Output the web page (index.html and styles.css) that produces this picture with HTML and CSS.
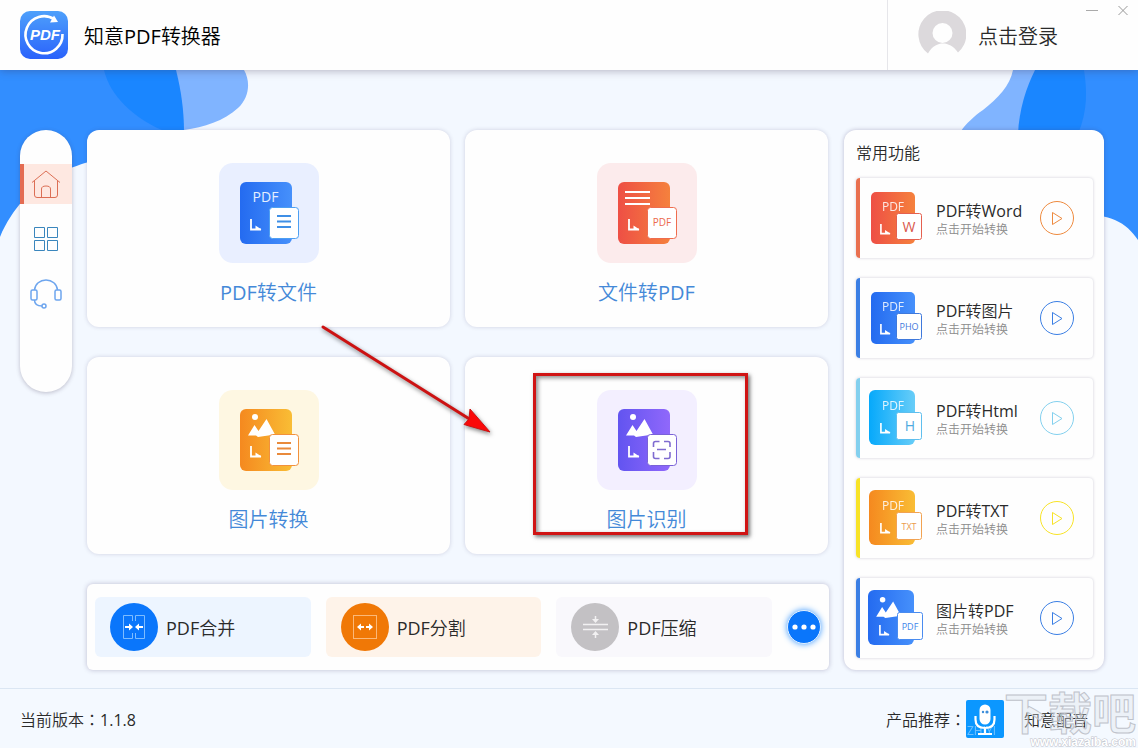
FILE: index.html
```html
<!DOCTYPE html>
<html lang="zh-CN">
<head>
  <meta charset="UTF-8">
  <meta name="viewport" content="width=device-width, initial-scale=1">
  <title>知意PDF转换器</title>
  <link rel="stylesheet" href="styles.css">
</head>
<body>

  <!-- shared gradients and icon parts -->
  <svg class="defs" width="0" height="0" aria-hidden="true">
    <defs>
      <linearGradient id="g-blue"><stop offset="0" stop-color="#246bf0"/><stop offset="1" stop-color="#4690fb"/></linearGradient>
      <linearGradient id="g-red"><stop offset="0" stop-color="#ee4f45"/><stop offset="1" stop-color="#f5813d"/></linearGradient>
      <linearGradient id="g-orange"><stop offset="0" stop-color="#f5891f"/><stop offset="1" stop-color="#f9bd35"/></linearGradient>
      <linearGradient id="g-purple"><stop offset="0" stop-color="#6254f0"/><stop offset="1" stop-color="#9068fb"/></linearGradient>
      <linearGradient id="g-cyan"><stop offset="0" stop-color="#06a9fb"/><stop offset="1" stop-color="#68cdf8"/></linearGradient>
      <linearGradient id="g-logo" x2="0" y2="1"><stop offset="0" stop-color="#4ea0fb"/><stop offset="1" stop-color="#2a62fb"/></linearGradient>
      <symbol id="corner" viewBox="0 0 12 12"><path d="M1 0V10.500H11" fill="none" stroke="#fff" stroke-width="1.800"/><path d="M5.500 10.500V6.500L11.500 10.500z" fill="#fff"/></symbol>
      <symbol id="photo" viewBox="0 0 28 24"><circle cx="7" cy="3" r="3" fill="#fff"/><path d="M0 21.500L6.500 11l4 6L18.500 5 27 20.500 10 23 8 21.500z" fill="#fff"/></symbol>
      <symbol id="play" viewBox="0 0 34 34"><circle cx="17" cy="17" r="16.500" fill="none" stroke="currentColor"/><path d="M12.500 11.500v12L22 17.500z" fill="none" stroke="currentColor" stroke-linejoin="round"/></symbol>
    </defs>
  </svg>

  <header class="topbar">
    <svg class="logo" viewBox="0 0 48 48" aria-hidden="true">
      <rect width="48" height="48" rx="10" fill="url(#g-logo)"/>
      <path d="M34.500 8.500A18.500 18.500 0 1 0 42.500 23" fill="none" stroke="#fff" stroke-width="2.600"/>
      <path d="M34 4.500L38 11l-8 .5z" fill="#fff"/>
      <text x="25" y="29" text-anchor="middle" class="logo-text">PDF</text>
    </svg>
    <h1>知意<span class="en">PDF</span>转换器</h1>
    <button class="login">
      <svg width="48" height="48" viewBox="0 0 48 48" aria-hidden="true">
        <path d="M10 42.500A24 24 0 1 1 40 41.500C35.500 35 30 32.500 25 32.500S14 35 10 42.500z" fill="#dcd9dc"/>
        <circle cx="24.500" cy="22" r="10" fill="#fefefe"/>
      </svg>
      点击登录
    </button>
    <div class="window-btns">
      <button aria-label="最小化"><svg width="14" height="14" viewBox="0 0 14 14"><path d="M1 7.500h12" stroke="#aaa"/></svg></button>
      <button aria-label="关闭"><svg width="14" height="14" viewBox="0 0 14 14"><path d="M2.500 3l9 9m0-9l-9 9" stroke="#999"/></svg></button>
    </div>
  </header>

  <main class="main">
    <svg class="blob blob-left" width="250" height="180" viewBox="0 0 250 180" aria-hidden="true">
      <path d="M150 0H244C251 12 249 28 238 38 224 51 204 57 184 60H150z" fill="#80b4ff"/>
      <path d="M90 0H176C181 20 184 40 184 62V80H90z" fill="#1a86ff"/>
      <path d="M0 0H104C110 26 134 48 162 60L110 86C72 96 26 108 0 167z" fill="#328eff"/>
    </svg>
    <svg class="blob blob-right" width="180" height="180" viewBox="0 0 180 180" aria-hidden="true">
      <path d="M55 0C52 16 40 28 25 40 16 46 8 54 3 61H100V0z" fill="#80b4ff"/>
      <path d="M77 0C68 18 61 40 60 64H150V0z" fill="#1a86ff"/>
      <path d="M126 0C129 20 130 40 120 64V144C152 144 168 152 180 170V0z" fill="#328eff"/>
    </svg>

    <nav class="sidebar">
      <button class="nav-btn active" aria-label="首页">
        <svg width="30" height="30" viewBox="0 0 30 30"><path d="M1 13.500L15 2l14 11.500M3.500 11.500V26q0 2.500 2.500 2.500H24q2.500 0 2.500-2.500V11.500M10.500 28.500V20q0-3 4.500-3t4.500 3v8.500"/></svg>
      </button>
      <button class="nav-btn apps" aria-label="全部功能">
        <svg width="26" height="26" viewBox="0 0 26 26"><path d="M1.500 1.500h10v10h-10zM14.500 1.500h10v10h-10zM1.500 14.500h10v10h-10zM14.500 14.500h10v10h-10z"/></svg>
      </button>
      <button class="nav-btn service" aria-label="客服">
        <svg width="34" height="30" viewBox="0 0 34 30"><path d="M5.500 11C6 5 11 1 17 1s11 4 11.500 10"/><rect x="2" y="11" width="6" height="10" rx="1.500"/><rect x="26" y="11" width="6" height="10" rx="1.500"/><path d="M5.500 21c0 4 3 6 7.500 6"/><circle cx="15" cy="27" r="2"/></svg>
      </button>
    </nav>

    <section class="workspace">
      <div class="cards">
        <button class="card">
          <svg class="tile tile-blue" viewBox="0 0 100 100" aria-hidden="true">
            <rect x="21" y="19" width="52" height="62" rx="6" fill="url(#g-blue)"/>
            <text x="46.500" y="39" class="doc-text" text-anchor="middle">PDF</text>
            <use href="#corner" x="31" y="56" width="12" height="12"/>
            <rect x="50.500" y="44.500" width="29" height="31" rx="3" fill="#fff" stroke="#4d9ff2"/>
            <path d="M58 53h14M58 58.500h14M58 64h14" stroke="#3f8fe6" stroke-width="2"/>
          </svg>
          <span><span class="en">PDF</span>转文件</span>
        </button>
        <button class="card">
          <svg class="tile tile-red" viewBox="0 0 100 100" aria-hidden="true">
            <rect x="21" y="19" width="52" height="62" rx="6" fill="url(#g-red)"/>
            <path d="M28 29h25M28 35h25M28 41h25" stroke="#fff" stroke-width="2"/>
            <use href="#corner" x="31" y="56" width="12" height="12"/>
            <rect x="50.500" y="44.500" width="29" height="31" rx="3" fill="#fff" stroke="#ef6d4e"/>
            <text x="65" y="63" class="page-text" text-anchor="middle" fill="#ec6a4c">PDF</text>
          </svg>
          <span>文件转<span class="en">PDF</span></span>
        </button>
        <button class="card">
          <svg class="tile tile-orange" viewBox="0 0 100 100" aria-hidden="true">
            <rect x="21" y="19" width="52" height="62" rx="6" fill="url(#g-orange)"/>
            <use href="#photo" x="29" y="24" width="28" height="24"/>
            <use href="#corner" x="31" y="56" width="12" height="12"/>
            <rect x="50.500" y="44.500" width="29" height="31" rx="3" fill="#fff" stroke="#f2913c"/>
            <path d="M58 53h14M58 58.500h14M58 64h14" stroke="#e98a3b" stroke-width="2"/>
          </svg>
          <span>图片转换</span>
        </button>
        <button class="card">
          <svg class="tile tile-purple" viewBox="0 0 100 100" aria-hidden="true">
            <rect x="21" y="19" width="52" height="62" rx="6" fill="url(#g-purple)"/>
            <use href="#photo" x="29" y="24" width="28" height="24"/>
            <use href="#corner" x="31" y="56" width="12" height="12"/>
            <rect x="50.500" y="44.500" width="29" height="31" rx="3" fill="#fff" stroke="#7a62d8"/>
            <path d="M56.500 57V53.500q0-2 2-2h4M67 51.500h4q2 0 2 2V57M56.500 62V66.500q0 2 2 2h4M67 68.500h4q2 0 2-2V62M60 59.500h9" fill="none" stroke="#7f6bd0" stroke-width="1.600"/>
          </svg>
          <span>图片识别</span>
          <i class="highlight"></i>
        </button>
      </div>

      <div class="toolbar">
        <button class="tool tool-merge">
          <svg width="48" height="48" viewBox="0 0 48 48" aria-hidden="true">
            <circle cx="24" cy="24" r="24" fill="#0a76fb"/>
            <path d="M22.500 18v-5.500h-9v23h9V30M25.500 18v-5.500h9v23h-9V30" fill="none" stroke="#7dbcff"/>
            <path d="M15 24h6M33 24h-6" stroke="#fff" stroke-width="2"/><path d="M19 20.500l4 3.500-4 3.500zM29 20.500L25 24l4 3.500z" fill="#fff"/>
          </svg>
          <span><span class="en">PDF</span>合并</span>
        </button>
        <button class="tool tool-split">
          <svg width="48" height="48" viewBox="0 0 48 48" aria-hidden="true">
            <circle cx="24" cy="24" r="24" fill="#f07806"/>
            <rect x="12.500" y="12.500" width="23" height="23" fill="none" stroke="#fbb878"/>
            <path d="M18 24h5M30 24h-5" stroke="#fff" stroke-width="2"/><path d="M20 20.500L16 24l4 3.500zM28 20.500l4 3.500-4 3.500z" fill="#fff"/>
          </svg>
          <span><span class="en">PDF</span>分割</span>
        </button>
        <button class="tool tool-zip">
          <svg width="48" height="48" viewBox="0 0 48 48" aria-hidden="true">
            <circle cx="24" cy="24" r="24" fill="#c3c1c4"/>
            <path d="M12 21.500h25M12 26.500h25M24.500 13v5M24.500 35v-5" stroke="#f2f1f2" stroke-width="1.500"/>
            <path d="M21 16l3.500 4 3.500-4zM21 32l3.500-4 3.500 4z" fill="#f2f1f2"/>
          </svg>
          <span><span class="en">PDF</span>压缩</span>
        </button>
        <button class="more" aria-label="更多">
          <svg width="24" height="6" viewBox="0 0 24 6"><circle cx="3" cy="3" r="2.600"/><circle cx="12" cy="3" r="2.600"/><circle cx="21" cy="3" r="2.600"/></svg>
        </button>
      </div>

      <svg class="arrow" width="180" height="120" viewBox="0 0 180 120" aria-hidden="true">
        <path d="M4 4L152 97" stroke="#cc1212" stroke-width="3" stroke-linecap="round"/>
        <path d="M171 109L145 101.500l5-5.500 1-10z" fill="#fa0808" stroke="#cc1212"/>
      </svg>
    </section>

    <aside class="common">
      <h2>常用功能</h2>
      <ul>
        <li class="item item-word">
          <svg width="54" height="56" viewBox="0 0 54 56" aria-hidden="true">
            <rect x="2" y="2" width="44" height="52" rx="5" fill="url(#g-red)"/>
            <text x="24" y="20.500" class="item-doc" text-anchor="middle">PDF</text>
            <use href="#corner" x="11" y="34" width="11" height="11"/>
            <rect x="27.500" y="23.500" width="25" height="26" rx="2" fill="#fff" stroke="#e5604f"/>
            <text x="40" y="42" class="item-letter" text-anchor="middle" fill="#d9574b">W</text>
          </svg>
          <div class="item-text"><h3><span class="en">PDF</span>转<span class="en">Word</span></h3><p>点击开始转换</p></div>
          <button class="play" aria-label="PDF转Word"><svg width="34" height="34"><use href="#play"/></svg></button>
        </li>
        <li class="item item-image">
          <svg width="54" height="56" viewBox="0 0 54 56" aria-hidden="true">
            <rect x="2" y="2" width="44" height="52" rx="5" fill="url(#g-blue)"/>
            <text x="24" y="20.500" class="item-doc" text-anchor="middle">PDF</text>
            <use href="#corner" x="11" y="34" width="11" height="11"/>
            <rect x="27.500" y="23.500" width="25" height="26" rx="2" fill="#fff" stroke="#3f79dc"/>
            <text x="40" y="40" class="item-page" text-anchor="middle" fill="#3f79dc">PHO</text>
          </svg>
          <div class="item-text"><h3><span class="en">PDF</span>转图片</h3><p>点击开始转换</p></div>
          <button class="play" aria-label="PDF转图片"><svg width="34" height="34"><use href="#play"/></svg></button>
        </li>
        <li class="item item-html">
          <svg width="54" height="56" viewBox="0 0 54 56" aria-hidden="true">
            <rect x="0" y="0" width="46" height="55" rx="6" fill="url(#g-cyan)"/>
            <text x="24" y="20" class="item-doc" text-anchor="middle">PDF</text>
            <use href="#corner" x="11" y="33" width="11" height="11"/>
            <rect x="27.500" y="22.500" width="25" height="27" rx="2" fill="#fff" stroke="#5fbfee"/>
            <text x="41" y="41" class="item-letter" text-anchor="middle" fill="#4fabdf">H</text>
          </svg>
          <div class="item-text"><h3><span class="en">PDF</span>转<span class="en">Html</span></h3><p>点击开始转换</p></div>
          <button class="play" aria-label="PDF转Html"><svg width="34" height="34"><use href="#play"/></svg></button>
        </li>
        <li class="item item-txt">
          <svg width="54" height="56" viewBox="0 0 54 56" aria-hidden="true">
            <rect x="0" y="0" width="46" height="55" rx="6" fill="url(#g-orange)"/>
            <text x="24" y="20" class="item-doc" text-anchor="middle">PDF</text>
            <use href="#corner" x="11" y="33" width="11" height="11"/>
            <rect x="27.500" y="22.500" width="25" height="27" rx="2" fill="#fff" stroke="#f2a352"/>
            <text x="40" y="40" class="item-page" text-anchor="middle" fill="#eb9c4d">TXT</text>
          </svg>
          <div class="item-text"><h3><span class="en">PDF</span>转<span class="en">TXT</span></h3><p>点击开始转换</p></div>
          <button class="play" aria-label="PDF转TXT"><svg width="34" height="34"><use href="#play"/></svg></button>
        </li>
        <li class="item item-photo">
          <svg width="54" height="56" viewBox="0 0 54 56" aria-hidden="true">
            <rect x="-1" y="0" width="46" height="55" rx="6" fill="url(#g-blue)"/>
            <use href="#photo" x="7" y="7" width="26" height="22"/>
            <use href="#corner" x="10" y="35" width="11" height="11"/>
            <rect x="28.500" y="22.500" width="25" height="27" rx="2" fill="#fff" stroke="#4a8cf0"/>
            <text x="41" y="40" class="item-page" text-anchor="middle" fill="#3f86ea">PDF</text>
          </svg>
          <div class="item-text"><h3>图片转<span class="en">PDF</span></h3><p>点击开始转换</p></div>
          <button class="play" aria-label="图片转PDF"><svg width="34" height="34"><use href="#play"/></svg></button>
        </li>
      </ul>
    </aside>
  </main>

  <footer class="footer">
    <span>当前版本<b class="colon" lang="zh-TW">：</b><span class="en">1.1.8</span></span>
    <a class="recommend" href="#">
      <span>产品推荐<b class="colon" lang="zh-TW">：</b></span>
      <svg width="38" height="38" viewBox="0 0 38 38" aria-hidden="true">
        <rect width="38" height="38" rx="2" fill="#0b97ff"/>
        <text x="1" y="35" class="ghost">ZHIYI</text>
        <rect x="13.500" y="4.500" width="11" height="20" rx="5.500" fill="#fff"/>
        <path d="M9.500 16v3.500q0 8.500 9.500 8.500t9.500-8.500V16M19 28v5M12 34h14" fill="none" stroke="#fff" stroke-width="2.200"/>
        <circle cx="17" cy="12" r="1.200" fill="#3d8edb"/><circle cx="21" cy="12" r="1.600" fill="#3d8edb"/>
      </svg>
      <span class="product">知意配音</span>
    </a>
    <div class="watermark">
      <strong>下载吧</strong>
      <small>www.xiazaiba.com</small>
    </div>
  </footer>

</body>
</html>
```
FILE: styles.css
```css
* {
  box-sizing: border-box;
}
body {
  margin: 0;
  min-height: 100vh;
  display: flex;
  flex-direction: column;
  font-family: "Open Sans", "Noto Sans CJK SC", sans-serif;
  font-weight: 350;
  font-size: 16px;
  color: #2a2a2a;
  background: #f3f8ff;
}
button {
  font: inherit;
  color: inherit;
  border: 0;
  padding: 0;
  background: none;
  cursor: pointer;
}
h1, h2, h3, p, ul {
  margin: 0;
  padding: 0;
  font-weight: inherit;
}
svg {
  flex: none;
}
.defs {
  position: absolute;
}
.en {
  font-weight: 400;
}

/* top bar */
.topbar {
  position: relative;
  z-index: 1;
  display: flex;
  align-items: center;
  height: 70px;
  padding-left: 20px;
  background: #fefefe;
  box-shadow: 0 1px 8px rgba(60, 50, 80, 0.35);
}
.logo {
  width: 48px;
  height: 48px;
}
.logo-text {
  font: italic bold 15px "Liberation Sans", sans-serif;
  fill: #fff;
}
.topbar h1 {
  margin-left: 16px;
  font-size: 20px;
  color: #000;
}
.login {
  display: flex;
  align-items: center;
  gap: 12px;
  width: 251px;
  height: 70px;
  margin-left: auto;
  padding-left: 30px;
  border-left: 1px solid #e6e6ea;
  font-size: 20px;
}
.window-btns {
  position: absolute;
  top: 3px;
  right: 8px;
  display: flex;
  gap: 17px;
}
.window-btns button {
  display: flex;
}

/* main area */
.main {
  position: relative;
  flex: 1;
  display: flex;
  align-items: flex-start;
  gap: 15px;
  padding: 60px 34px 18px 20px;
}
.blob {
  position: absolute;
  top: 0;
}
.blob-left {
  left: 0;
}
.blob-right {
  right: 0;
}
.sidebar {
  position: relative;
  display: flex;
  flex-direction: column;
  gap: 15px;
  width: 52px;
  padding: 34px 0 78px;
  border-radius: 26px;
  background: #fefefe;
  box-shadow: 0 1px 4px rgba(60, 50, 80, 0.3);
}
.nav-btn {
  display: flex;
  align-items: center;
  justify-content: center;
  height: 40px;
}
.nav-btn svg {
  fill: none;
  stroke: currentColor;
}
.nav-btn.active {
  padding-right: 4px;
  border-left: 4px solid #e46c52;
  background: #fee8e1;
  color: #dc6f55;
}
.apps {
  color: #3a86bd;
}
.service {
  color: #6da5ee;
}
.service svg {
  stroke-width: 1.5;
}

.workspace {
  position: relative;
  flex: 1;
  min-width: 0;
}
.cards {
  display: grid;
  grid-template-columns: 1fr 1fr;
  gap: 30px 15px;
  padding-right: 1px;
}
.card {
  position: relative;
  display: flex;
  flex-direction: column;
  align-items: center;
  gap: 16px;
  padding: 33px 0 20px;
  border-radius: 12px;
  background: #fefefe;
  box-shadow: 0 0 4px rgba(60, 50, 100, 0.2);
  font-size: 20px;
  line-height: 28px;
  color: #4489d8;
}
.tile {
  width: 100px;
  height: 100px;
  border-radius: 14px;
}
.tile-blue { background: #e9efff; }
.tile-red { background: #fcebec; }
.tile-orange { background: #fef7e2; }
.tile-purple { background: #f3efff; }
.doc-text {
  font-size: 14px;
  font-weight: 400;
  fill: #e6efff;
}
.page-text {
  font-size: 10px;
  font-weight: 400;
}
.highlight {
  position: absolute;
  top: 16px;
  left: 68px;
  width: 215px;
  height: 162px;
  border: 3px solid #d01414;
  box-shadow: 2px 2px 4px rgba(0, 0, 0, 0.55), inset 2px 2px 4px rgba(0, 0, 0, 0.45);
}
.arrow {
  position: absolute;
  top: 193px;
  left: 232px;
  filter: drop-shadow(1px 2px 2px rgba(0, 0, 0, 0.5));
  pointer-events: none;
}

.toolbar {
  display: flex;
  align-items: center;
  gap: 15px;
  margin-top: 30px;
  padding: 13px 8px;
  border-radius: 6px;
  background: #fefefe;
  box-shadow: 0 0 5px rgba(60, 50, 100, 0.3);
}
.tool {
  flex: 1;
  display: flex;
  align-items: center;
  gap: 8px;
  height: 60px;
  padding-left: 15px;
  border-radius: 6px;
  font-size: 18px;
}
.tool-merge { background: #edf5ff; }
.tool-split { background: #fef3e9; }
.tool-zip { background: #f9f8fc; }
.more {
  display: flex;
  align-items: center;
  justify-content: center;
  width: 34px;
  height: 34px;
  border: 1px solid #e3f1ff;
  border-radius: 50%;
  background: #0a76fb;
  box-shadow: 0 0 6px #3f9bff;
}
.more svg {
  fill: #fff;
}

/* common functions */
.common {
  position: relative;
  width: 260px;
  padding: 12px 11px 12px 12px;
  border-radius: 12px;
  background: #fefefe;
  box-shadow: 0 0 4px rgba(60, 50, 100, 0.3);
}
.common h2 {
  margin-bottom: 14px;
  font-size: 16px;
  line-height: 22px;
}
.common ul {
  display: flex;
  flex-direction: column;
  gap: 20px;
  list-style: none;
}
.item {
  display: flex;
  align-items: center;
  height: 80px;
  padding: 0 19px 0 9px;
  border-left: 4px solid;
  border-radius: 4px;
  box-shadow: 0 0 3px rgba(60, 50, 100, 0.25);
}
.item > svg {
  overflow: visible;
}
.item-text {
  flex: 1;
  margin-left: 13px;
  padding-top: 4px;
  white-space: nowrap;
}
.item-text h3 {
  font-size: 16px;
  line-height: 20px;
  color: #2a2a2a;
}
.item-text p {
  font-size: 12px;
  line-height: 18px;
  color: #8c8c8c;
}
.item-doc {
  font-size: 12px;
  font-weight: 400;
  fill: #fff;
  opacity: 0.85;
}
.item-letter {
  font-size: 14px;
  font-weight: 400;
}
.item-page {
  font-size: 9px;
  font-weight: 400;
}
.play {
  display: flex;
}
.item-word { color: #e9704f; }
.item-word .play { color: #ee8a3e; }
.item-image, .item-photo { color: #3b7fe4; }
.item-html { color: #83d0ee; }
.item-txt { color: #f8e326; }

/* footer */
.footer {
  position: relative;
  display: flex;
  align-items: center;
  justify-content: space-between;
  height: 60px;
  padding: 0 50px 0 20px;
  border-top: 1px solid #dbe6f3;
  background: #f4f9ff;
}
.colon {
  font-family: "Noto Sans CJK TC", sans-serif;
  font-weight: inherit;
  line-height: 1;
}
.recommend {
  display: flex;
  align-items: center;
  color: inherit;
  text-decoration: none;
}
.product {
  margin-left: 20px;
}
.ghost {
  font-size: 12px;
  font-weight: 400;
  fill: #fff;
  opacity: 0.4;
}
.watermark {
  position: absolute;
  right: 2px;
  bottom: 0;
  display: flex;
  flex-direction: column;
  align-items: flex-end;
  pointer-events: none;
}
.watermark strong {
  font-size: 44px;
  line-height: 46px;
  font-weight: 700;
  color: rgba(225, 229, 236, 0.4);
  -webkit-text-stroke: 1px #bfc3cb;
}
.watermark small {
  font: bold 12px/12px "Liberation Sans", sans-serif;
  color: #fff;
  -webkit-text-stroke: 1px #bfc3cb;
  paint-order: stroke fill;
}
```
